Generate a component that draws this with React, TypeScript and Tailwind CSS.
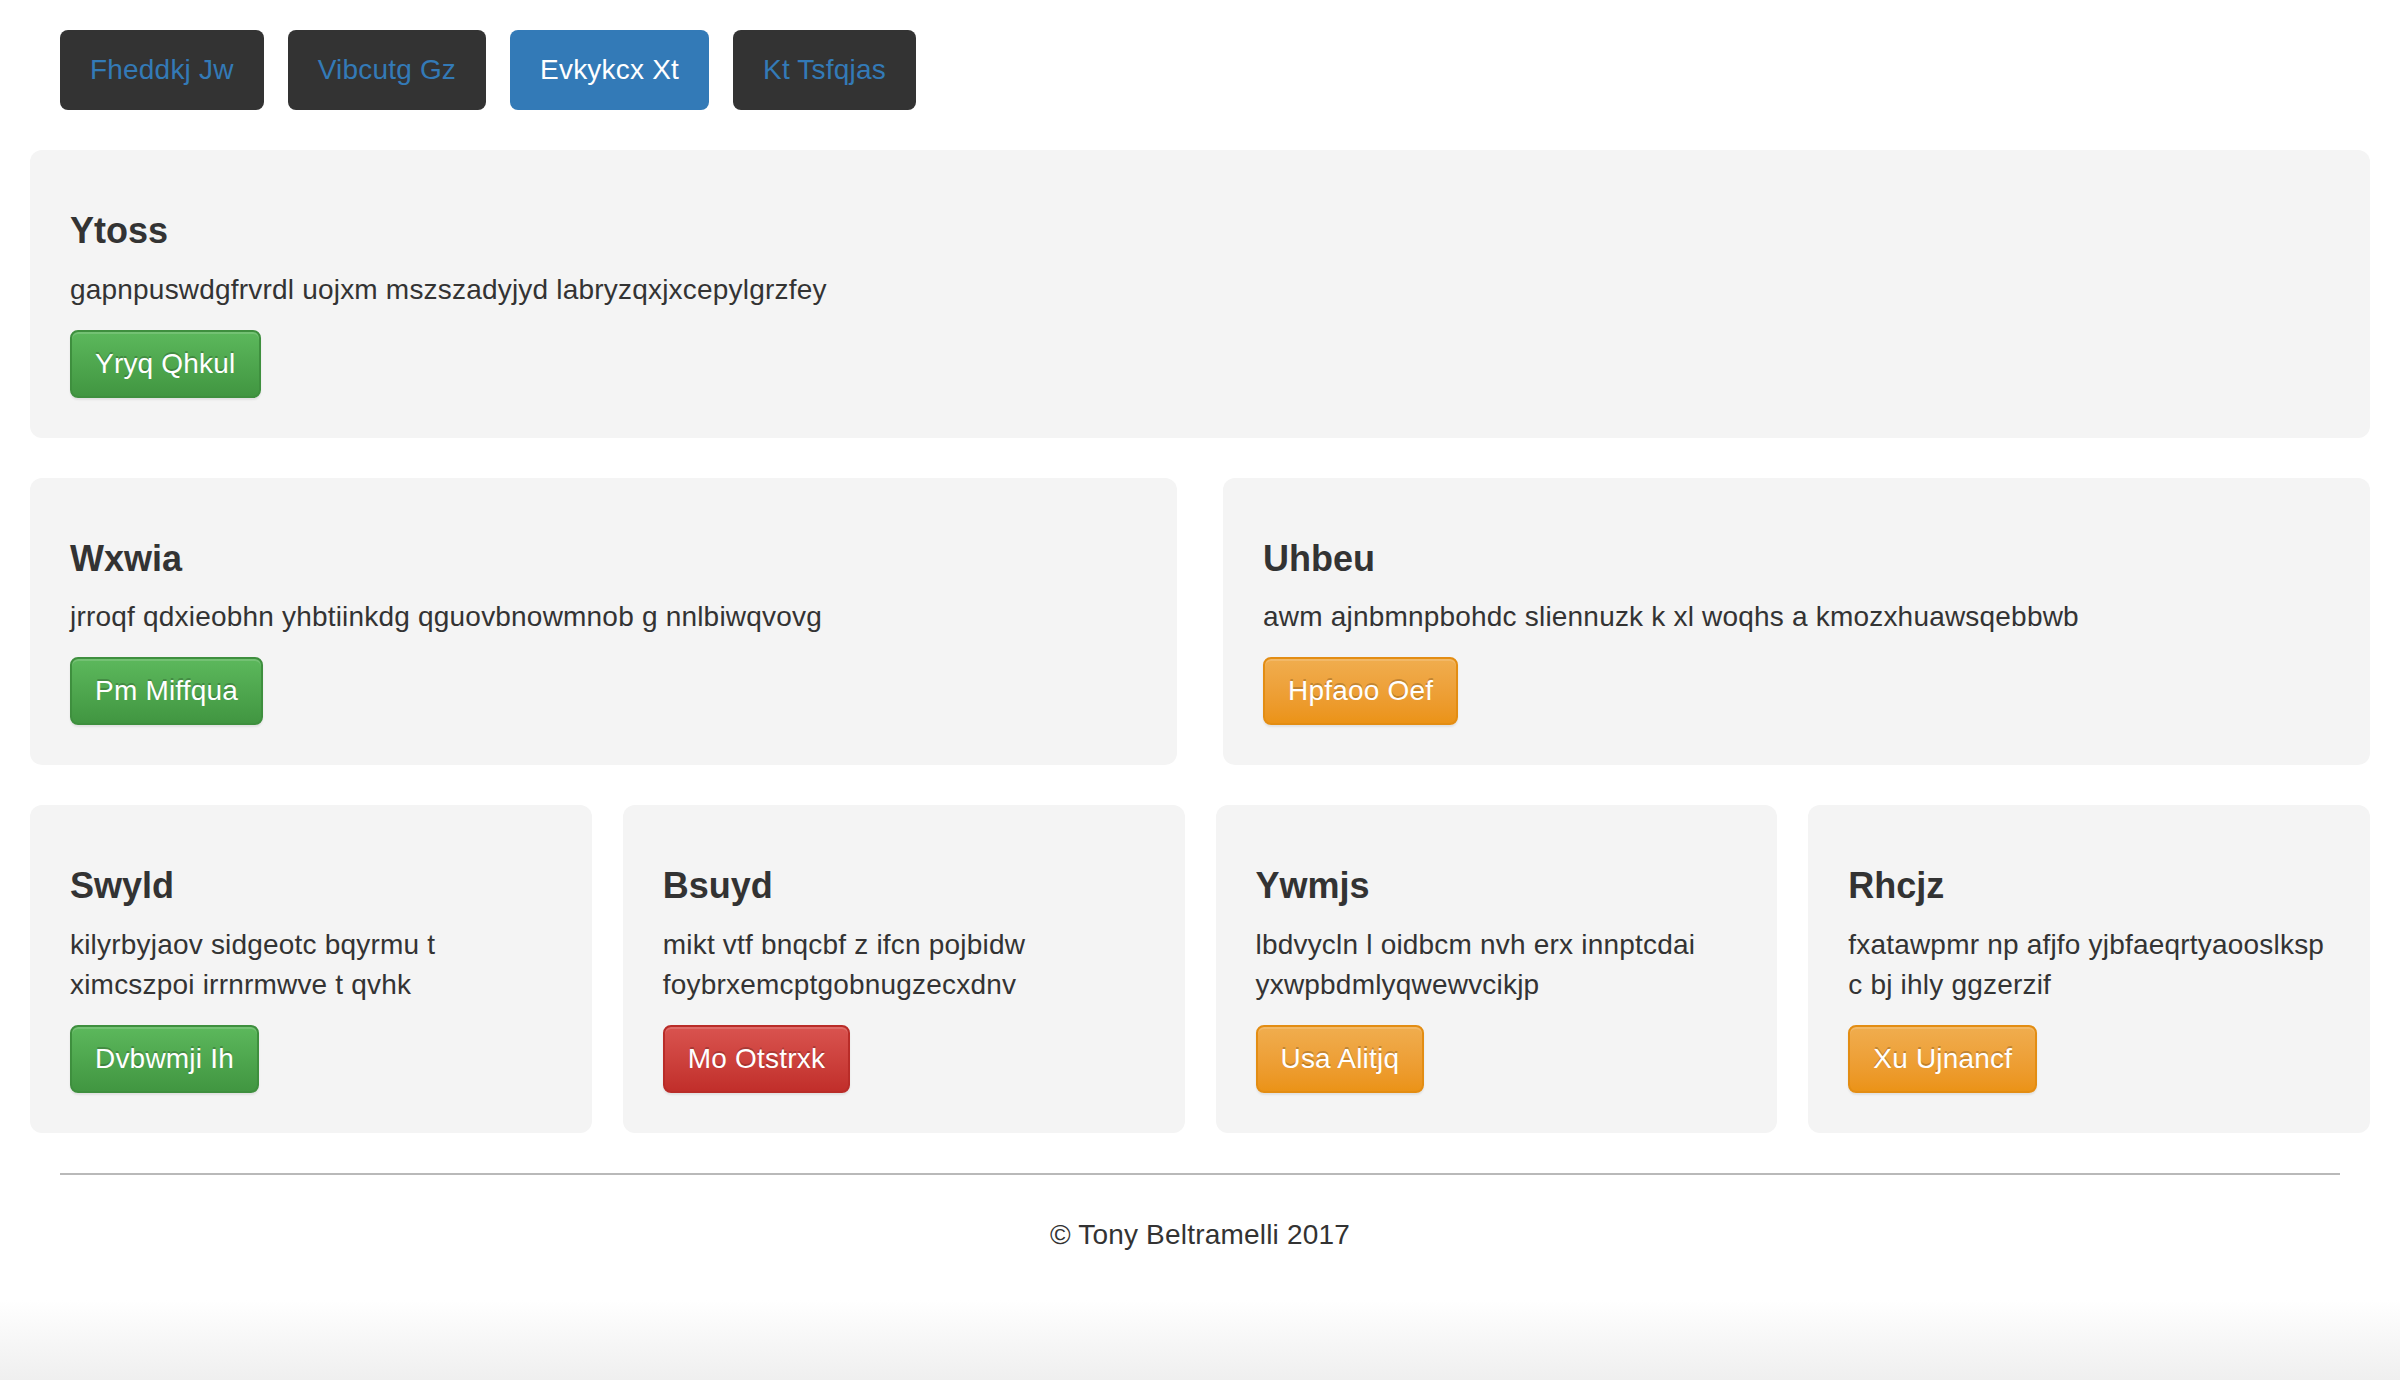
import React from "react";

type Tone = "success" | "warning" | "danger";

const toneClass: Record<Tone, string> = {
  success: "bg-gradient-to-b from-[#5cb85c] to-[#419641] border-[#3e8f3e]",
  warning: "bg-gradient-to-b from-[#f0ad4e] to-[#eb9316] border-[#e38d13]",
  danger: "bg-gradient-to-b from-[#d9534f] to-[#c12e2a] border-[#b92c28]",
};

const navItems = [
  { label: "Fheddkj Jw", active: false },
  { label: "Vibcutg Gz", active: false },
  { label: "Evkykcx Xt", active: true },
  { label: "Kt Tsfqjas", active: false },
];

const ActionButton = ({ label, tone }: { label: string; tone: Tone }) => (
  <button
    className={`h-[68px] px-[23px] border-2 rounded-[8px] text-[28px] leading-[40px] tracking-[0.2px] text-white [text-shadow:0_-2px_0_rgba(0,0,0,0.2)] shadow-[inset_0_2px_0_rgba(255,255,255,0.15),0_2px_2px_rgba(0,0,0,0.075)] ${toneClass[tone]}`}
  >
    {label}
  </button>
);

const Well = ({
  title,
  lines,
  button,
  tone,
  className = "",
}: {
  title: string;
  lines: string[];
  button: string;
  tone: Tone;
  className?: string;
}) => (
  <div className={`rounded-[12px] bg-[#f4f4f4] p-[40px] ${className}`}>
    <h4 className="mt-[21px] mb-[19px] text-[36px] leading-[39.6px] font-semibold">{title}</h4>
    <p className="mb-[20px] text-[28px] leading-[40px] tracking-[0.2px] whitespace-nowrap">
      {lines.map((l, i) => (
        <React.Fragment key={i}>
          {i > 0 && <br />}
          {l}
        </React.Fragment>
      ))}
    </p>
    <ActionButton label={button} tone={tone} />
  </div>
);

export default function App() {
  return (
    <div className="h-[1380px] flex flex-col bg-white text-[#333] font-['Liberation_Sans',Arial,sans-serif]">
      <div className="px-[30px]">
        <nav className="pt-[30px] px-[30px] flex gap-[24px]">
          {navItems.map((n) => (
            <a
              key={n.label}
              className={`h-[80px] px-[30px] flex items-center rounded-[8px] text-[28px] tracking-[0.2px] ${
                n.active ? "bg-[#337ab7] text-white" : "bg-[#333] text-[#337ab7]"
              }`}
            >
              {n.label}
            </a>
          ))}
        </nav>

        <div className="mt-[40px] flex flex-col gap-[40px]">
          <Well
            title="Ytoss"
            lines={["gapnpuswdgfrvrdl uojxm mszszadyjyd labryzqxjxcepylgrzfey"]}
            button="Yryq Qhkul"
            tone="success"
          />

          <div className="flex gap-[46px]">
            <Well
              className="flex-1"
              title="Wxwia"
              lines={["jrroqf qdxieobhn yhbtiinkdg qguovbnowmnob g nnlbiwqvovg"]}
              button="Pm Miffqua"
              tone="success"
            />
            <Well
              className="flex-1"
              title="Uhbeu"
              lines={["awm ajnbmnpbohdc sliennuzk k xl woqhs a kmozxhuawsqebbwb"]}
              button="Hpfaoo Oef"
              tone="warning"
            />
          </div>

          <div className="flex gap-[31px]">
            <Well
              className="flex-1"
              title="Swyld"
              lines={["kilyrbyjaov sidgeotc bqyrmu t", "ximcszpoi irrnrmwve t qvhk"]}
              button="Dvbwmji Ih"
              tone="success"
            />
            <Well
              className="flex-1"
              title="Bsuyd"
              lines={["mikt vtf bnqcbf z ifcn pojbidw", "foybrxemcptgobnugzecxdnv"]}
              button="Mo Otstrxk"
              tone="danger"
            />
            <Well
              className="flex-1"
              title="Ywmjs"
              lines={["lbdvycln l oidbcm nvh erx innptcdai", "yxwpbdmlyqwewvcikjp"]}
              button="Usa Alitjq"
              tone="warning"
            />
            <Well
              className="flex-1"
              title="Rhcjz"
              lines={["fxatawpmr np afjfo yjbfaeqrtyaooslksp", "c bj ihly ggzerzif"]}
              button="Xu Ujnancf"
              tone="warning"
            />
          </div>
        </div>

        <footer className="px-[30px] mt-[40px]">
          <hr className="border-0 border-t-2 border-[#b9b9b9]" />
          <p className="mt-[40px] text-center text-[28px] leading-[40px] tracking-[0.2px]">© Tony Beltramelli 2017</p>
        </footer>
      </div>
      <div className="mt-auto h-[80px] bg-gradient-to-b from-white to-[#efefef]" />
    </div>
  );
}
